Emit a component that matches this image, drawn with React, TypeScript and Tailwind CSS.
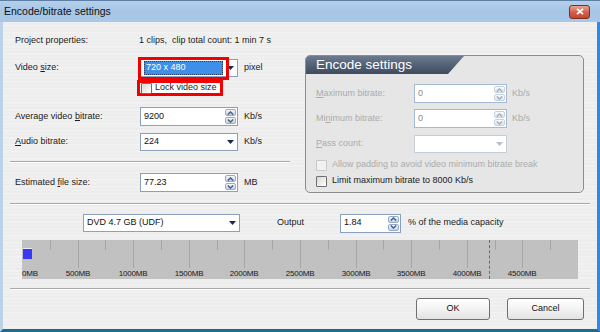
import React from 'react';

function Chevron({ up, color }: { up?: boolean; color: string }) {
  return (
    <svg width="7" height="4" viewBox="0 0 7 4">
      <path d={up ? 'M0.8 3.6L3.5 0.9L6.2 3.6' : 'M0.8 0.4L3.5 3.1L6.2 0.4'} fill="none" stroke={color} strokeWidth="1.4" />
    </svg>
  );
}

function Spinner({ disabled = false }: { disabled?: boolean }) {
  const btn = disabled
    ? 'flex flex-1 items-center justify-center rounded-[2px] border border-[#c6d1de] bg-gradient-to-b from-[#fafbfd] to-[#dfe6ee]'
    : 'flex flex-1 items-center justify-center rounded-[2px] border border-[#97aac6] bg-gradient-to-b from-[#f6f9fd] to-[#c3d2e6]';
  const color = disabled ? '#a3afc0' : '#4d6185';
  return (
    <div className="flex w-[13px] flex-col gap-px p-px">
      <div className={btn}>
        <Chevron up color={color} />
      </div>
      <div className={btn}>
        <Chevron color={color} />
      </div>
    </div>
  );
}

function Arrow({ color = '#1b2850' }: { color?: string }) {
  return (
    <svg width="7" height="4" viewBox="0 0 7 4">
      <path d="M0 0H7L3.5 4Z" fill={color} />
    </svg>
  );
}

function Field({ value, w, disabled = false }: { value: string; w: string; disabled?: boolean }) {
  return (
    <div className={`flex h-[19px] ${w} border bg-white ${disabled ? 'border-[#a4b9d2]' : 'border-[#8ba0bb]'}`}>
      <span className={`flex flex-1 items-center pl-[3px] ${disabled ? 'text-[#8a8a8a]' : 'text-[#111]'}`}>{value}</span>
      <Spinner disabled={disabled} />
    </div>
  );
}

function Combo({ value, w, disabled = false }: { value: string; w: string; disabled?: boolean }) {
  return (
    <div className={`flex h-[18px] ${w} items-center border bg-white ${disabled ? 'border-[#c4ccd6]' : 'border-[#8ba0bb]'}`}>
      <span className="flex-1 pl-[3px] text-[#111]">{value}</span>
      <span className="flex w-[13px] justify-center">
        <Arrow color={disabled ? '#b8bec8' : '#1b2850'} />
      </span>
    </div>
  );
}

function Check({ disabled = false }: { disabled?: boolean }) {
  return (
    <span
      className={`block h-[11px] w-[11px] shrink-0 rounded-[1px] border ${
        disabled ? 'border-[#c8c8c8] bg-[#f2f2f2]' : 'border-[#6e6e6e] bg-gradient-to-br from-[#d8d8d8] to-white'
      }`}
    />
  );
}

function Separator() {
  return <div className="h-[2px] border-t border-b border-t-[#a9a9a9] border-b-white" />;
}

const ticks = Array.from({ length: 20 }, (_, i) => i);
const labels = ['0MB', '500MB', '1000MB', '1500MB', '2000MB', '2500MB', '3000MB', '3500MB', '4000MB', '4500MB'];
const STEP = 27.8;

function CapacityBar() {
  return (
    <div className="relative ml-[12px] mt-[8px] h-[39px] w-[556px] overflow-hidden bg-[#c1c1c1]">
      {ticks.map((i) =>
        i === 0 ? null : (
          <div
            key={i}
            className={`absolute top-0 w-px bg-[#a6a6a6] ${i % 2 === 0 ? 'h-[28px]' : 'h-[10px]'}`}
            style={{ left: Math.round(i * STEP) }}
          />
        )
      )}
      <div className="absolute left-[1px] top-[8px] h-[11px] w-[9px] border-t border-t-[#e8e8ff] bg-[#3838f8]" />
      <div className="absolute top-0 h-full w-px border-l border-dashed border-[#ff2a2a]" style={{ left: 467 }} />
      {labels.map((t, i) => (
        <span
          key={t}
          className={`absolute top-[29px] text-[8px] leading-[10px] tracking-[-0.2px] text-[#1a1a1a] ${i === 0 ? 'left-0' : '-translate-x-1/2'}`}
          style={i === 0 ? undefined : { left: Math.round(i * 2 * STEP) }}
        >
          {t}
        </span>
      ))}
    </div>
  );
}

export default function App() {
  return (
    <div className="flex h-[332px] w-[600px] flex-col overflow-hidden font-['Liberation_Sans',Arial,sans-serif] text-[9px] text-[#1a1a1a]">
      {/* Title bar */}
      <div className="flex h-[22px] items-center justify-between border-t border-[#5d7fa3] bg-gradient-to-b from-[#b3cfeb] via-[#a7c6e6] to-[#a9c8e7] pl-[4px] pr-[10px]">
        <span className="text-[10.5px] text-[#101010]">Encode/bitrate settings</span>
        <div className="flex h-[14px] w-[21px] items-center justify-center rounded-[3px] border border-[#7b3026] bg-gradient-to-b from-[#eaa494] via-[#d4614b] to-[#c4452f]">
          <svg width="8" height="7" viewBox="0 0 8 7">
            <path d="M1 0.8L7 6.2M7 0.8L1 6.2" stroke="white" strokeWidth="1.8" />
          </svg>
        </div>
      </div>

      {/* Body */}
      <div className="flex flex-1 flex-col border-b-[3px] border-l-[3px] border-r-[3px] border-b-[#1f6b8c] border-l-[#bcd2e8] border-r-[#2f8ae6] bg-[repeating-linear-gradient(180deg,#f1f1f1_0px,#ebebeb_2px,#f4f4f4_4px,#ececec_5px,#f0f0f0_7px)] px-[7px]">
        <div className="flex">
          {/* Left column */}
          <div className="flex w-[280px] flex-col pt-[12px]">
            <div className="flex h-[14px] items-center">
              <span className="w-[130px] pl-[5px]">Project properties:</span>
              <span className="-ml-[1px]">1 clips,&nbsp; clip total count: 1 min 7 s</span>
            </div>

            <div className="mt-[9px] flex h-[22px] items-center">
              <span className="w-[130px] pl-[5px]">
                Video <u className="underline-offset-1">s</u>ize:
              </span>
              <div className="relative flex h-[18px] w-[98px] items-center border border-[#8ba0bb] bg-white">
                <span className="ml-[3px] flex h-[14px] w-[79px] items-center border border-dotted border-[#2a3a60] bg-[#3d8fe9] pl-[1px] text-white">
                  720 x 480
                </span>
                <span className="ml-auto flex w-[13px] justify-center">
                  <Arrow />
                </span>
                <div className="absolute -left-[3px] -top-[3px] h-[23px] w-[91px] border-[3px] border-[#f00000]" />
              </div>
              <span className="ml-[6px]">pixel</span>
            </div>

            <div className="mt-[1px] flex h-[16px] items-center">
              <span className="w-[127px]" />
              <div className="flex h-[16px] w-[86px] items-center gap-[3px] border-[3px] border-[#f00000] bg-white pl-[1px]">
                <Check />
                <span className="whitespace-nowrap">Lock video size</span>
              </div>
            </div>

            <div className="mt-[11px] flex h-[19px] items-center">
              <span className="w-[130px] pl-[5px]">
                Average video <u className="underline-offset-1">b</u>itrate:
              </span>
              <Field value="9200" w="w-[98px]" />
              <span className="ml-[6px]">Kb/s</span>
            </div>

            <div className="mt-[7px] flex h-[18px] items-center">
              <span className="w-[130px] pl-[5px]">
                <u className="underline-offset-1">A</u>udio bitrate:
              </span>
              <Combo value="224" w="w-[98px]" />
              <span className="ml-[6px]">Kb/s</span>
            </div>

            <div className="mt-[10px]">
              <Separator />
            </div>

            <div className="mt-[10px] flex h-[19px] items-center">
              <span className="w-[130px] pl-[5px]">
                Estimated <u className="underline-offset-1">f</u>ile size:
              </span>
              <Field value="77.23" w="w-[98px]" />
              <span className="ml-[6px]">MB</span>
            </div>
          </div>

          {/* Encode settings panel */}
          <div className="ml-[15px] mt-[33px] flex h-[138px] w-[279px] flex-col overflow-hidden rounded-[5px] border border-[#8c8c8c] bg-[#e6e6e6]">
            <div className="flex h-[18px] w-[158px] items-center bg-gradient-to-b from-[#6b7a8f] to-[#3f4b5e] pl-[10px] [clip-path:polygon(0_0,100%_0,calc(100%-16px)_100%,0_100%)]">
              <span className="text-[13.5px] leading-none text-white">Encode settings</span>
            </div>

            <div className="flex flex-col pl-[10px] text-[#ababab]">
              <div className="mt-[10px] flex h-[19px] items-center">
                <span className="w-[98px]">
                  <u className="underline-offset-1">M</u>aximum bitrate:
                </span>
                <Field value="0" w="w-[93px]" disabled />
                <span className="ml-[5px]">Kb/s</span>
              </div>
              <div className="mt-[6px] flex h-[19px] items-center">
                <span className="w-[98px]">
                  Mi<u className="underline-offset-1">n</u>imum bitrate:
                </span>
                <Field value="0" w="w-[93px]" disabled />
                <span className="ml-[5px]">Kb/s</span>
              </div>
              <div className="mt-[7px] flex h-[17px] items-center">
                <span className="w-[98px]">
                  <u className="underline-offset-1">P</u>ass count:
                </span>
                <Combo value="" w="w-[93px]" disabled />
              </div>
              <div className="mt-[7px] flex h-[12px] items-center gap-[5px]">
                <Check disabled />
                <span>Allow padding to avoid video minimum bitrate break</span>
              </div>
              <div className="mt-[4px] flex h-[12px] items-center gap-[5px] text-[#1a1a1a]">
                <Check />
                <span>Limit maximum bitrate to 8000 Kb/s</span>
              </div>
            </div>
          </div>
        </div>

        <div className="mt-[10px]">
          <Separator />
        </div>

        {/* Media row */}
        <div className="mt-[9px] flex h-[18px] items-center">
          <span className="ml-[73px]">
            <Combo value="DVD 4.7 GB (UDF)" w="w-[157px]" />
          </span>
          <span className="ml-[37px] w-[63px]">Output</span>
          <Field value="1.84" w="w-[61px]" />
          <span className="ml-[7px]">% of the media capacity</span>
        </div>

        <CapacityBar />

        <div className="mt-[9px]">
          <Separator />
        </div>

        {/* Buttons */}
        <div className="mr-[6px] mt-[8px] flex justify-end gap-[17px]">
          <button className="flex h-[22px] w-[74px] items-center justify-center rounded-[3px] border border-[#707070] bg-gradient-to-b from-white via-[#f3f3f3] to-[#e2e2e2] text-[9px] text-[#111]">
            OK
          </button>
          <button className="flex h-[22px] w-[77px] items-center justify-center rounded-[3px] border border-[#707070] bg-gradient-to-b from-white via-[#f3f3f3] to-[#e2e2e2] text-[9px] text-[#111]">
            Cancel
          </button>
        </div>
      </div>
    </div>
  );
}
